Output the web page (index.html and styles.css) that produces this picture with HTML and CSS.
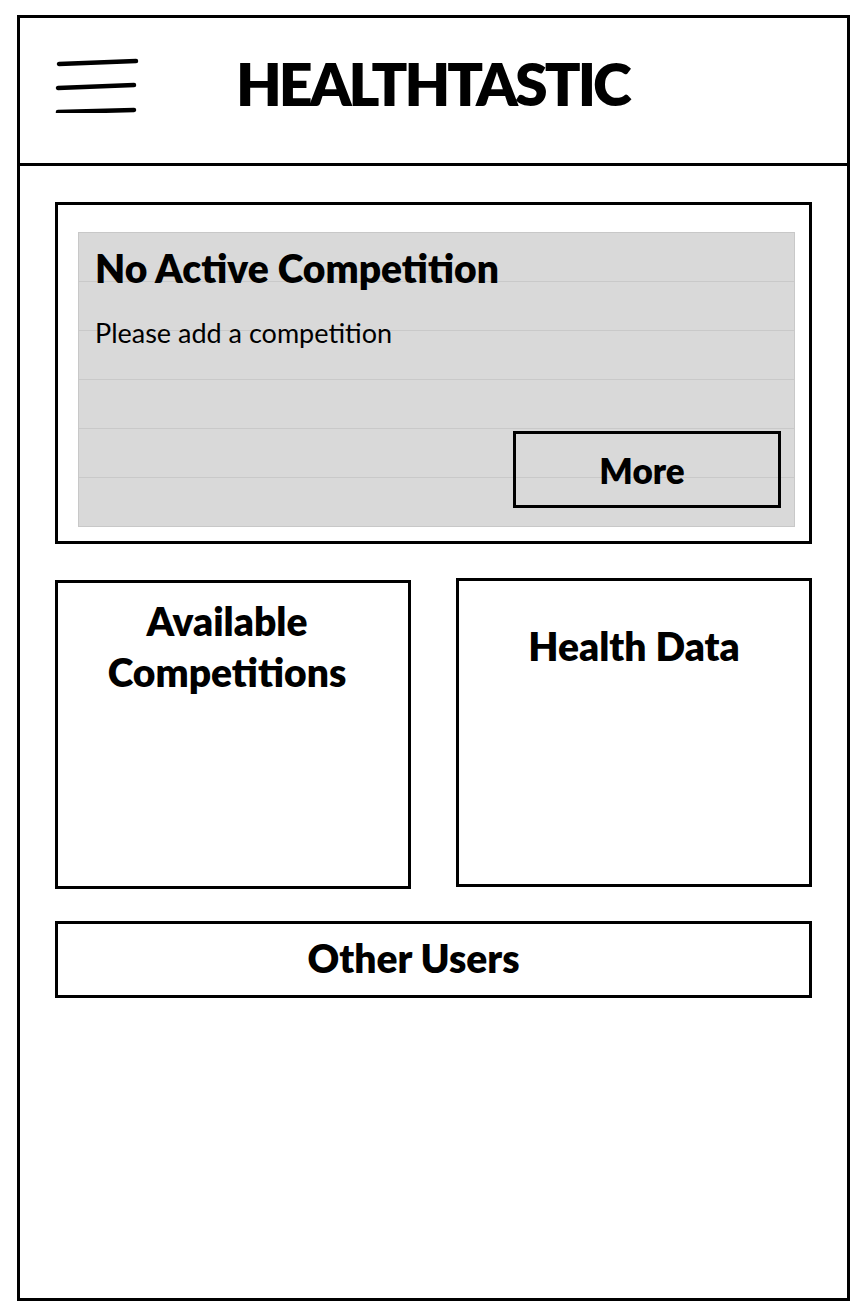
FILE: index.html
```html
<!DOCTYPE html>
<html>
<head>
<meta charset="utf-8">
<link rel="stylesheet" href="styles.css">
</head>
<body>
<div class="frame">
  <header class="header">
    <svg class="menu" width="90" height="64" viewBox="0 0 90 64">
      <path d="M4 15 L81 12" />
      <path d="M3 39 L79 36" />
      <path d="M3 63 L79 61" />
    </svg>
    <h1 class="title">HEALTHTASTIC</h1>
  </header>
  <main class="main">
    <section class="card">
      <div class="panel">
        <h2 class="panel-title">No Active Competition</h2>
        <p class="panel-text">Please add a competition</p>
        <div class="more">More</div>
      </div>
    </section>
    <div class="row">
      <section class="box box-left"><h2 class="box-title">Available<br>Competitions</h2></section>
      <section class="box box-right"><h2 class="box-title">Health Data</h2></section>
    </div>
    <section class="bar"><h2 class="bar-title">Other Users</h2></section>
  </main>
</div>
</body>
</html>
```
FILE: styles.css
```css
* { box-sizing: border-box; }
body {
  margin: 0;
  padding: 15px 0 0 17px;
  background: #fff;
  font-family: Lato, "Open Sans", sans-serif;
  color: #000;
}
.frame {
  width: 833px;
  height: 1286px;
  border: 3px solid #000;
  display: flex;
  flex-direction: column;
}
.header {
  height: 148px;
  flex: none;
  border-bottom: 3px solid #000;
  display: flex;
  align-items: center;
  position: relative;
}
.menu {
  position: absolute;
  left: 35px;
  top: 31px;
}
.menu path {
  stroke: #000;
  stroke-width: 4.5;
  stroke-linecap: round;
  fill: none;
}
.title {
  margin: -15px 0 0 216px;
  font-size: 59px;
  font-weight: 800;
  letter-spacing: -3px;
  line-height: 1;
}
.main {
  padding: 36px 35px 0 35px;
  display: flex;
  flex-direction: column;
}
.card {
  height: 342px;
  border: 3px solid #000;
  padding: 27px 14px 14px 20px;
}
.panel {
  height: 100%;
  border: 1px solid #c8c8c8;
  background: repeating-linear-gradient(to bottom, #d9d9d9 0 48px, #c9c9c9 48px 49px);
  padding: 12px 13px 18px 16px;
  display: flex;
  flex-direction: column;
}
.panel-title {
  margin: 0;
  font-size: 39px;
  font-weight: 800;
  line-height: 46px;
}
.panel-text {
  margin: 26px 0 0;
  font-size: 27px;
  line-height: 32px;
}
.more {
  margin-top: auto;
  align-self: flex-end;
  width: 268px;
  height: 77px;
  border: 3px solid #000;
  display: flex;
  align-items: center;
  justify-content: center;
  padding-right: 10px;
  font-size: 35px;
  font-weight: 800;
}
.row {
  margin-top: 34px;
  display: flex;
  justify-content: space-between;
  align-items: flex-start;
}
.box {
  width: 356px;
  height: 309px;
  border: 3px solid #000;
}
.box-left { margin-top: 2px; }
.box-title {
  margin: 0;
  text-align: center;
  font-size: 39px;
  font-weight: 800;
  line-height: 51px;
}
.box-left .box-title { padding: 13px 12px 0 0; }
.box-right .box-title { padding: 40px 0 0 0; }
.bar {
  margin-top: 32px;
  height: 77px;
  border: 3px solid #000;
  display: flex;
  align-items: center;
  justify-content: center;
}
.bar-title {
  margin: -3px 0 0 -40px;
  font-size: 39px;
  font-weight: 800;
  line-height: 1;
}
```
